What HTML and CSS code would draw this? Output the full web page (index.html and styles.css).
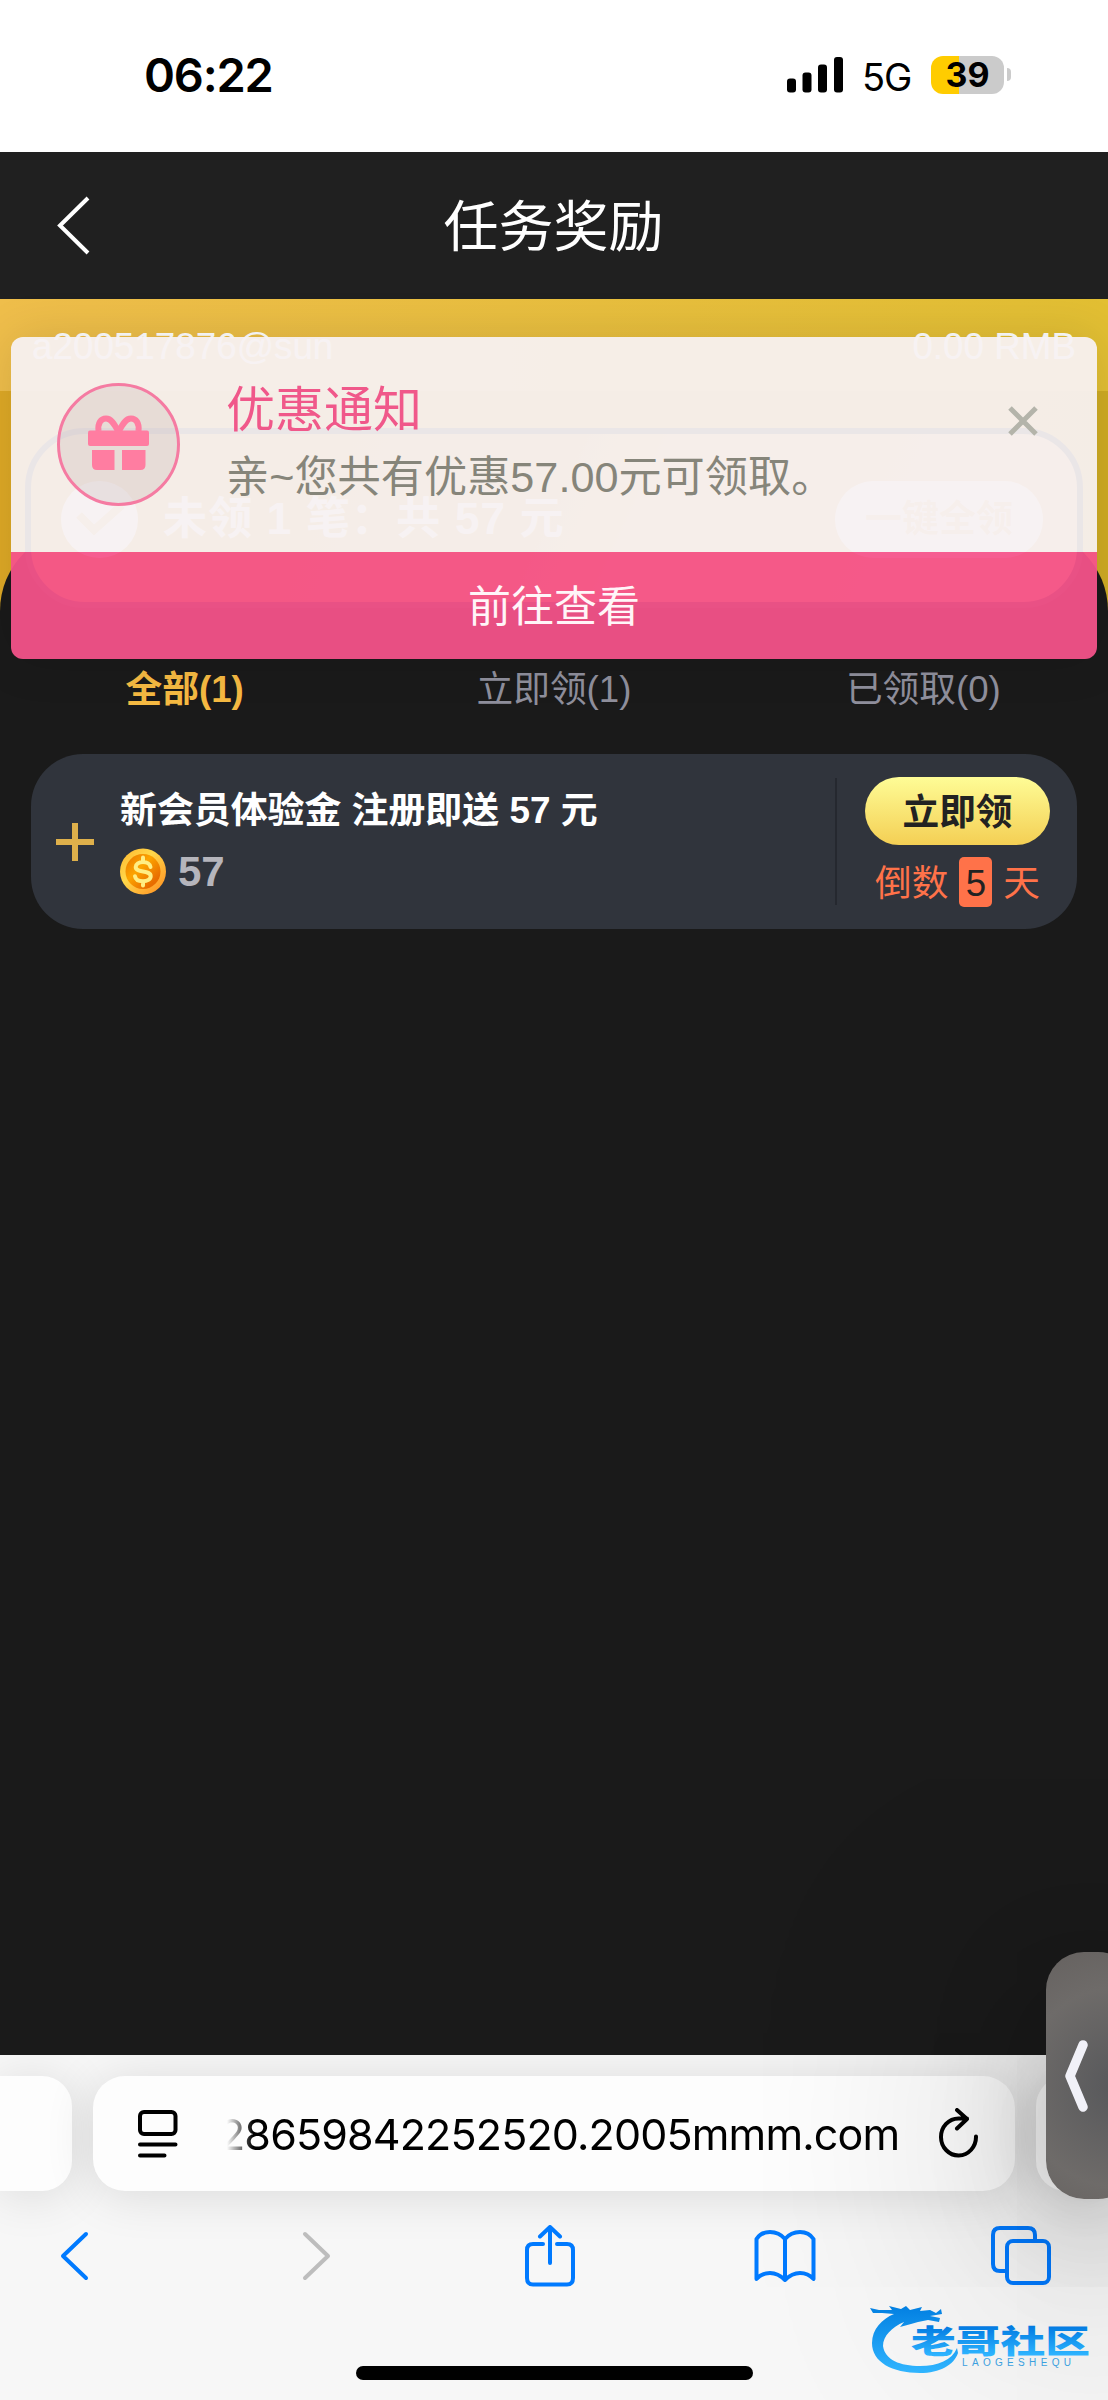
FILE: index.html
```html
<!DOCTYPE html>
<html lang="zh-CN">
<head>
<meta charset="utf-8">
<title>任务奖励</title>
<link rel="stylesheet" href="styles.css">
</head>
<body>
<div class="screen">
  <header class="status">
    <span class="clock">06:22</span>
    <svg class="signal" width="56" height="36" viewBox="0 0 56 36"><rect x="0" y="21.500" width="9" height="14" rx="3"/><rect x="15.500" y="15.500" width="9" height="20" rx="3"/><rect x="31" y="7.500" width="9" height="28" rx="3"/><rect x="47" y="0" width="9" height="35.500" rx="3"/></svg>
    <span class="network">5G</span>
    <span class="battery">39</span>
    <i class="battery-nub"></i>
  </header>

  <nav class="titlebar">
    <svg class="titlebar-back" width="40" height="64" viewBox="0 0 40 64"><path d="M34 4 6 31.500 34 59"/></svg>
    <h1>任务奖励</h1>
  </nav>

  <main class="page">
    <div class="account"><span>a200517876@sun</span><span>0.00 RMB</span></div>
    <div class="summary">
      <svg class="summary-check" width="77" height="77" viewBox="0 0 77 77"><circle cx="38.500" cy="38.500" r="38.500" fill="#fff"/><path d="M18 34 33 49 61 24" fill="none" stroke="#e6c070" stroke-width="8"/></svg>
      <b class="summary-text">未领 1 笔：共 57 元</b>
      <span class="summary-button">一键全领</span>
    </div>
    <section class="panel">
      <div class="tabs"><b>全部(1)</b><span>立即领(1)</span><span>已领取(0)</span></div>
      <article class="reward">
        <svg class="reward-plus" width="40" height="40" viewBox="0 0 40 40"><path d="M20 1V39M1 20H39"/></svg>
        <div class="reward-info">
          <h2>新会员体验金 注册即送 57 元</h2>
          <div class="reward-amount">
            <svg width="46" height="47" viewBox="0 0 46 46">
              <defs>
                <linearGradient id="rim" x1="0" y1="0" x2="1" y2="1"><stop offset="0" stop-color="#ffb52e"/><stop offset=".4" stop-color="#ffd84a"/><stop offset="1" stop-color="#ff8a1e"/></linearGradient>
                <linearGradient id="face" x1="0" y1="0" x2="1" y2="1"><stop offset="0" stop-color="#e87400"/><stop offset=".4" stop-color="#fca400"/><stop offset=".8" stop-color="#e86d00"/></linearGradient>
              </defs>
              <circle cx="23" cy="23" r="23" fill="url(#rim)"/><circle cx="23" cy="23" r="17.500" fill="url(#face)"/>
              <path d="M23 9v4M23 33v4M30.500 18.500c-.5-3-3.500-5-7.500-5s-7.300 2-7.300 5c0 6.500 15 2.500 15 9.200 0 3-3.500 5-7.700 5s-7.500-1.700-8-5" fill="none" stroke="#ffee84" stroke-width="4" stroke-linecap="round"/>
            </svg>
            <b>57</b>
          </div>
        </div>
        <div class="reward-action">
          <span class="claim">立即领</span>
          <div class="countdown"><span>倒数</span><em>5</em><span>天</span></div>
        </div>
      </article>
    </section>
  </main>

  <footer class="browser">
    <div class="address-row">
      <div class="address-side"></div>
      <div class="address">
        <svg width="40" height="48" viewBox="0 0 40 48"><rect x="2" y="2" width="35.500" height="22" rx="4"/><path d="M2 34.500H37.500M2 45.500H26.500"/></svg>
        <span class="url">28659842252520.2005mmm.com</span>
        <svg class="reload" width="42" height="50" viewBox="0 0 42 50"><path d="M38 28.500A17.500 18.500 0 1 1 20.500 10.500H29M19 2 29 11 19 20.500"/></svg>
      </div>
      <div class="address-side"></div>
    </div>
    <div class="tools">
      <svg width="30" height="50" viewBox="0 0 30 50"><path d="M26 3 3 25 26 47"/></svg>
      <svg class="muted" width="30" height="50" viewBox="0 0 30 50"><path d="M4 3 27 25 4 47"/></svg>
      <svg width="50" height="62" viewBox="0 0 50 62"><path d="M18 19H8Q2 19 2 25V53Q2 59.500 8 59.500H42Q48 59.500 48 53V25Q48 19 42 19H32M25 38V3M15 11.500 25 2 35 11.500"/></svg>
      <svg width="62" height="52" viewBox="0 0 62 52"><path d="M31 9Q25 2 16 2T2.500 9V49Q8 43 16 43T31 50Q38 43 46 43T59.500 49V9Q55 2 46 2T31 9V50"/></svg>
      <svg width="60" height="60" viewBox="0 0 60 60"><path d="M15 45H9Q2 45 2 38V9Q2 2 9 2H37Q44 2 44 9V14"/><rect x="16" y="15" width="42" height="42" rx="6"/></svg>
    </div>
    <i class="home-bar"></i>
  </footer>

  <div class="toast">
    <div class="toast-body">
      <div class="gift">
        <svg width="61" height="56" viewBox="0 0 61 56"><path d="M30.500 17C26 8 23 3.500 18 3.500S9.500 8 10.500 16M30.500 17C35 8 38 3.500 43 3.500S51.500 8 50.500 16" fill="none" stroke="#ff7da1" stroke-width="6"/><rect y="15.500" width="61" height="15.500" rx="2" fill="#ff7da1"/><path d="M4 35H26.500V55H9Q4 55 4 50ZM34 35H57.500V50Q57.500 55 52.500 55H34Z" fill="#ff7da1"/></svg>
      </div>
      <div class="toast-copy"><h3>优惠通知</h3><p>亲~您共有优惠57.00元可领取。</p></div>
      <svg class="toast-close" width="30" height="30" viewBox="0 0 30 30"><path d="M2 2 28 28M28 2 2 28"/></svg>
    </div>
    <div class="toast-button">前往查看</div>
  </div>

  <div class="drawer"><svg width="24" height="76" viewBox="0 0 24 76"><path d="M18 7 5 38 18 69"/></svg></div>

  <svg class="brand" width="226" height="80" viewBox="0 0 226 80">
    <defs><linearGradient id="brandfill" gradientUnits="userSpaceOnUse" x1="0" y1="8" x2="0" y2="78"><stop offset="0" stop-color="#007de0"/><stop offset="1" stop-color="#30b5ff"/></linearGradient>
    <linearGradient id="namefill" gradientUnits="userSpaceOnUse" x1="0" y1="30" x2="0" y2="60"><stop offset="0" stop-color="#0078e0"/><stop offset="1" stop-color="#2db4ff"/></linearGradient></defs>
    <path fill="url(#brandfill)" d="M0 13 9 15 22 15 19 11 31 14 36 11 40 15 52 12 50 16 60 15 66 18 71 14 72 19 60 21 70 23 69 27 58 25 48 27 41 29 30 32 34 27 C22 32 13 41 13 51 C15 65 30 71 50 71 C68 71 82 65 87 53 L88 58 C84 70 70 78 50 78 C22 78 2 67 2 48 C2 34 12 24 24 19 L12 18 3 18 Z"/>
    <text class="brand-name" x="41" y="58" textLength="179" lengthAdjust="spacingAndGlyphs">老哥社区</text>
    <text class="brand-latin" x="92" y="71" textLength="109">LAOGESHEQU</text>
  </svg>
</div>
</body>
</html>
```
FILE: styles.css
```css
* { box-sizing: border-box; }
body { margin: 0; font-family: "Liberation Sans", "Noto Sans CJK SC", sans-serif; }
h1, h2, h3, p { margin: 0; font-weight: 400; }
svg { display: block; flex: none; }
.screen { position: relative; width: 1108px; height: 2400px; overflow: hidden; background: #1a1a1a; display: flex; flex-direction: column; }

.status { height: 152px; background: #fff; display: flex; align-items: center; padding: 0 97px 3px 144px; font-family: Inter, sans-serif; color: #000; }
.clock { font-size: 47px; font-weight: 600; width: 643px; letter-spacing: -1.2px; }
.network { font-size: 38px; margin-left: 19px; width: 69px; letter-spacing: -1px; padding-top: 4px; }
.battery { width: 73px; height: 38px; border-radius: 12px; background: linear-gradient(90deg, #ffcc00 28px, #cbcbcb 28px); font-size: 34px; font-weight: 700; line-height: 38px; text-align: center; }
.battery-nub { width: 4px; height: 13px; margin-left: 3px; background: #cbcbcb; border-radius: 0 4px 4px 0; }

.titlebar { height: 147px; background: #202020; display: flex; align-items: center; color: #fff; padding: 0 54px; }
.titlebar-back path { fill: none; stroke: #fff; stroke-width: 4; }
.titlebar h1 { flex: 1; text-align: center; font-size: 55px; line-height: 80px; padding: 3px 41px 0 0; }

.page { height: 1756px; display: flex; flex-direction: column; background: linear-gradient(90deg, #dea926, #cfac24) 0 0 / 100% 400px no-repeat; }
.account { height: 92px; padding: 3px 32px 0; display: flex; justify-content: space-between; align-items: center; font-size: 36.800px; color: #fff; background: linear-gradient(90deg, #efbe4b, #e2bf33); }
.summary { position: relative; z-index: 1; margin: 37px 25px 0; height: 180px; border: 6px solid #2f343c; border-radius: 60px; display: flex; align-items: center; padding: 0 34px 0 30px; background: linear-gradient(115deg, #dcac36, #dcad44 45%, #e4b468 60%, #eabc78); }
.summary-check { margin-top: 2px; }
.summary-text { margin: 0 0 6px 25px; flex: 1; font-size: 44px; color: #fff; white-space: nowrap; letter-spacing: 1.2px; }
.summary-button { width: 208px; height: 77px; border-radius: 39px; background: #fff; color: #ecc080; font-size: 37px; font-weight: 700; line-height: 77px; text-align: center; margin-top: 2px; }
.panel { flex: 1; margin-top: -79px; border-radius: 82px 82px 0 0; background: #1a1a1a; padding: 130px 31px 0; }
.tabs { display: grid; grid-template-columns: repeat(3, 1fr); margin: 0 -31px; height: 58px; line-height: 62px; text-align: center; font-size: 36.700px; color: #8f8f9c; }
.tabs b { color: #f5b942; }
.reward { margin-top: 37px; height: 175px; border-radius: 52px; background: #30343c; display: flex; align-items: center; padding: 0 27px 0 24px; }
.reward-plus path { stroke: #deb04b; stroke-width: 6; }
.reward-info { margin-left: 25px; flex: 1; height: 127px; border-right: 2px solid #25282f; padding-top: 7px; }
.reward-info h2 { font-size: 36.900px; line-height: 52px; font-weight: 700; color: #fff; white-space: nowrap; }
.reward-amount { display: flex; align-items: center; gap: 12px; margin-top: 10px; font-size: 42px; line-height: 49px; color: #b5b5bc; }
.reward-action { margin-left: 28px; width: 185px; height: 130px; display: flex; flex-direction: column; justify-content: space-between; align-items: center; }
.claim { width: 185px; height: 68px; border-radius: 34px; background: linear-gradient(#fefc96, #f4cf54); color: #222; font-size: 36.700px; font-weight: 700; line-height: 71px; text-align: center; }
.countdown { display: flex; align-items: center; height: 50px; font-size: 36.700px; line-height: 50px; color: #ff7249; white-space: nowrap; }
.countdown span { padding-top: 5px; }
.countdown em { width: 33px; height: 50px; margin: 0 11px; border-radius: 5px; background: #ff7249; color: #222; font-style: normal; text-align: center; line-height: 54px; }

.browser { flex: 1; background: #f7f7f7; padding-top: 21px; display: flex; flex-direction: column; overflow: hidden; }
.address-row { display: flex; gap: 21px; height: 115px; }
.address-side { width: 72px; flex: none; background: #fdfdfd; border-radius: 0 30px 30px 0; box-shadow: 0 4px 50px rgba(0,0,0,.12); }
.address-side:last-child { border-radius: 30px 0 0 30px; }
.address { width: 922px; flex: none; background: #fdfdfd; border-radius: 32px; box-shadow: 0 4px 50px rgba(0,0,0,.12); display: flex; align-items: center; padding: 0 34px 0 45px; }
.address svg, .tools svg { fill: none; stroke: #000; stroke-width: 4; stroke-linecap: round; stroke-linejoin: round; }
.url { flex: none; width: 710px; margin-left: 41px; font: 400 43px Inter, sans-serif; letter-spacing: -0.850px; white-space: nowrap; color: transparent; background: linear-gradient(90deg, transparent 8px, #000 34px); background-clip: text; -webkit-background-clip: text; }
.reload { margin: 0 0 2px 9px; }
.tools { height: 130px; display: flex; align-items: center; padding-left: 60px; }
.tools svg { stroke: #007aff; }
.tools svg.muted { stroke: #bdbdbd; }
.tools svg:nth-child(2) { margin-left: 211px; }
.tools svg:nth-child(3) { margin-left: 194px; }
.tools svg:nth-child(4) { margin-left: 179px; }
.tools svg:nth-child(5) { margin-left: 175px; }
.home-bar { align-self: center; width: 397px; height: 14px; margin-top: 45px; border-radius: 7px; background: #000; }

.toast { position: absolute; left: 11px; top: 337px; width: 1086px; height: 322px; border-radius: 12px; overflow: hidden; z-index: 3; box-shadow: 0 0 50px rgba(0,0,0,.12); }
.toast-body { height: 215px; background: rgba(246,241,242,.94); display: flex; padding: 46px 59px 0 46px; }
.gift { width: 123px; height: 123px; border: 3px solid #f57ba2; border-radius: 50%; background: rgba(180,160,160,.22); display: flex; align-items: center; justify-content: center; padding-bottom: 3px; }
.toast-copy { flex: 1; margin-left: 46px; }
.toast-copy h3 { font-size: 49px; line-height: 56px; margin-top: -1px; color: #f0588a; }
.toast-copy p { font-size: 43.200px; line-height: 56px; margin-top: 11px; color: #86857a; white-space: nowrap; }
.toast-close { margin-top: 23px; }
.toast-close path { stroke: #b4b4aa; stroke-width: 5; }
.toast-button { height: 107px; line-height: 110px; background: rgba(245,83,138,.94); color: #fff5f8; font-size: 43px; text-align: center; }

.drawer { position: absolute; z-index: 2; left: 1046px; top: 1952px; width: 90px; height: 247px; border-radius: 38px; background: radial-gradient(circle at 75px 135px, #56575a, #6e6b69 100px, #666260 150px); box-shadow: 0 30px 120px rgba(0,0,0,.2), 0 60px 320px 60px rgba(0,0,0,.18); display: flex; align-items: center; padding-left: 19px; }
.drawer path { fill: none; stroke: #f1f1f8; stroke-width: 9.500; stroke-linecap: round; stroke-linejoin: round; }
.brand { position: absolute; z-index: 4; left: 870px; top: 2295px; }
.brand-name { font: 900 32px "Noto Sans CJK SC", sans-serif; fill: url(#namefill); }
.brand-latin { font: 400 10px "Liberation Sans", sans-serif; fill: #3ba0df; }
```
